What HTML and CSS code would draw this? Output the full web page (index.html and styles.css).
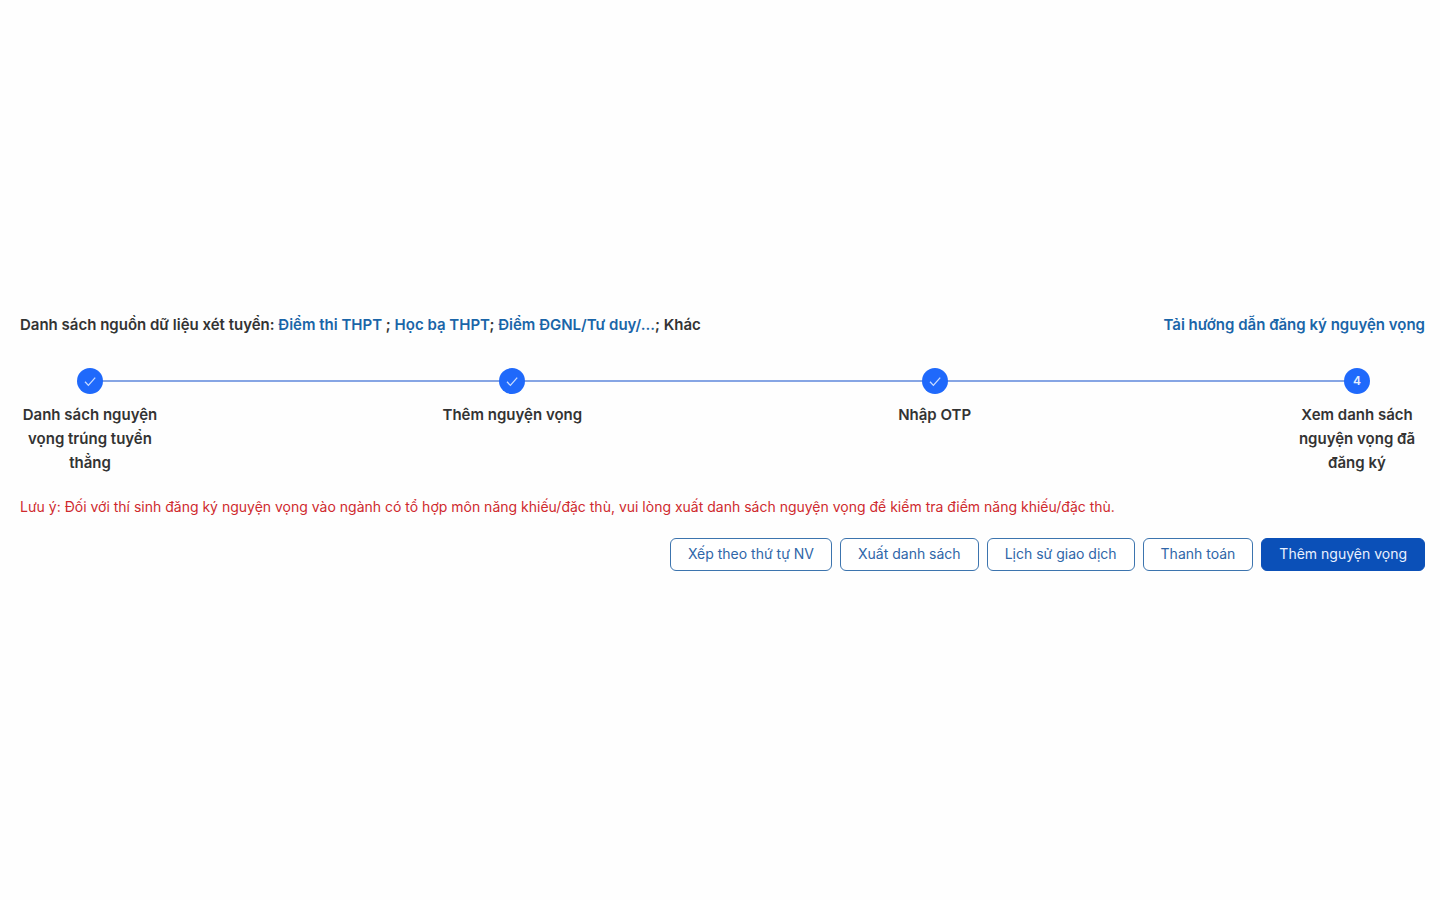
FILE: index.html
```html
<!DOCTYPE html>
<html lang="vi">
<head>
<meta charset="utf-8">
<meta name="viewport" content="width=device-width, initial-scale=1">
<title>Đăng ký nguyện vọng</title>
<link rel="stylesheet" href="styles.css">
</head>
<body>
<main class="page">
  <header class="topbar">
    <p class="sources">Danh sách nguồn dữ liệu xét tuyển: <a href="#thi">Điểm thi THPT</a> ; <a href="#hocba">Học bạ THPT</a>; <a href="#dgnl">Điểm ĐGNL/Tư duy/...</a>; Khác</p>
    <a class="guide" href="#huongdan">Tải hướng dẫn đăng ký nguyện vọng</a>
  </header>
  <ol class="steps">
    <li class="step">
      <span class="dot"><svg class="check" viewBox="0 0 14 14" aria-hidden="true"><path d="M2 7.8 5.4 11.4 12.2 3.6"/></svg></span>
      <span class="label">Danh sách nguyện vọng trúng tuyển thẳng</span>
    </li>
    <li class="step">
      <span class="dot"><svg class="check" viewBox="0 0 14 14" aria-hidden="true"><path d="M2 7.8 5.4 11.4 12.2 3.6"/></svg></span>
      <span class="label">Thêm nguyện vọng</span>
    </li>
    <li class="step">
      <span class="dot"><svg class="check" viewBox="0 0 14 14" aria-hidden="true"><path d="M2 7.8 5.4 11.4 12.2 3.6"/></svg></span>
      <span class="label">Nhập OTP</span>
    </li>
    <li class="step" aria-current="step">
      <span class="dot">4</span>
      <span class="label">Xem danh sách nguyện vọng đã đăng ký</span>
    </li>
  </ol>
  <p class="note">Lưu ý: Đối với thí sinh đăng ký nguyện vọng vào ngành có tổ hợp môn năng khiếu/đặc thù, vui lòng xuất danh sách nguyện vọng để kiểm tra điểm năng khiếu/đặc thù.</p>
  <div class="actions">
    <button class="btn" type="button">Xếp theo thứ tự NV</button>
    <button class="btn" type="button">Xuất danh sách</button>
    <button class="btn" type="button">Lịch sử giao dịch</button>
    <button class="btn" type="button">Thanh toán</button>
    <button class="btn primary" type="button">Thêm nguyện vọng</button>
  </div>
</main>
</body>
</html>
```
FILE: styles.css
```css
* { box-sizing: border-box; }
body {
  margin: 0;
  background: #fefefe;
  color: #333;
  font-family: Inter, "Liberation Sans", sans-serif;
  font-size: 14px;
  line-height: 24px;
}
.page { padding: 313px 15px 40px 20px; }
.topbar {
  display: flex;
  justify-content: space-between;
  gap: 24px;
  font-size: 15px;
  font-weight: 600;
}
.sources, .note { margin: 0; }
a { color: #1a65a8; text-decoration: none; }
.steps {
  position: relative;
  display: flex;
  justify-content: space-between;
  margin: 31px -2px 0 0;
  padding: 0;
  list-style: none;
}
.steps::before {
  content: "";
  position: absolute;
  top: 12px;
  left: 70px;
  right: 70px;
  height: 2px;
  background: #86a5e4;
}
.step {
  position: relative;
  display: flex;
  flex-direction: column;
  align-items: center;
  gap: 9px;
  width: 140px;
}
.dot {
  display: flex;
  align-items: center;
  justify-content: center;
  width: 26px;
  height: 26px;
  border-radius: 50%;
  background: #1f69fb;
  color: #e6efff;
  font-size: 12px;
  font-weight: 600;
}
.check { width: 14px; height: 14px; fill: none; stroke: #c9dcff; stroke-width: 1.3; }
.label { font-size: 15px; font-weight: 600; text-align: center; }
.note { margin-top: 20px; color: #cf2a2e; }
.actions {
  display: flex;
  flex-wrap: wrap;
  justify-content: flex-end;
  gap: 8px;
  margin-top: 19px;
}
.btn {
  height: 33px;
  padding: 0 17px 2px;
  border: 1px solid #3c74ae;
  border-radius: 6px;
  background: #fff;
  color: #2f66a8;
  font: inherit;
  line-height: 20px;
}
.primary { border-color: #0b50b8; background: #0b50b8; color: #e9f1ff; }
```
